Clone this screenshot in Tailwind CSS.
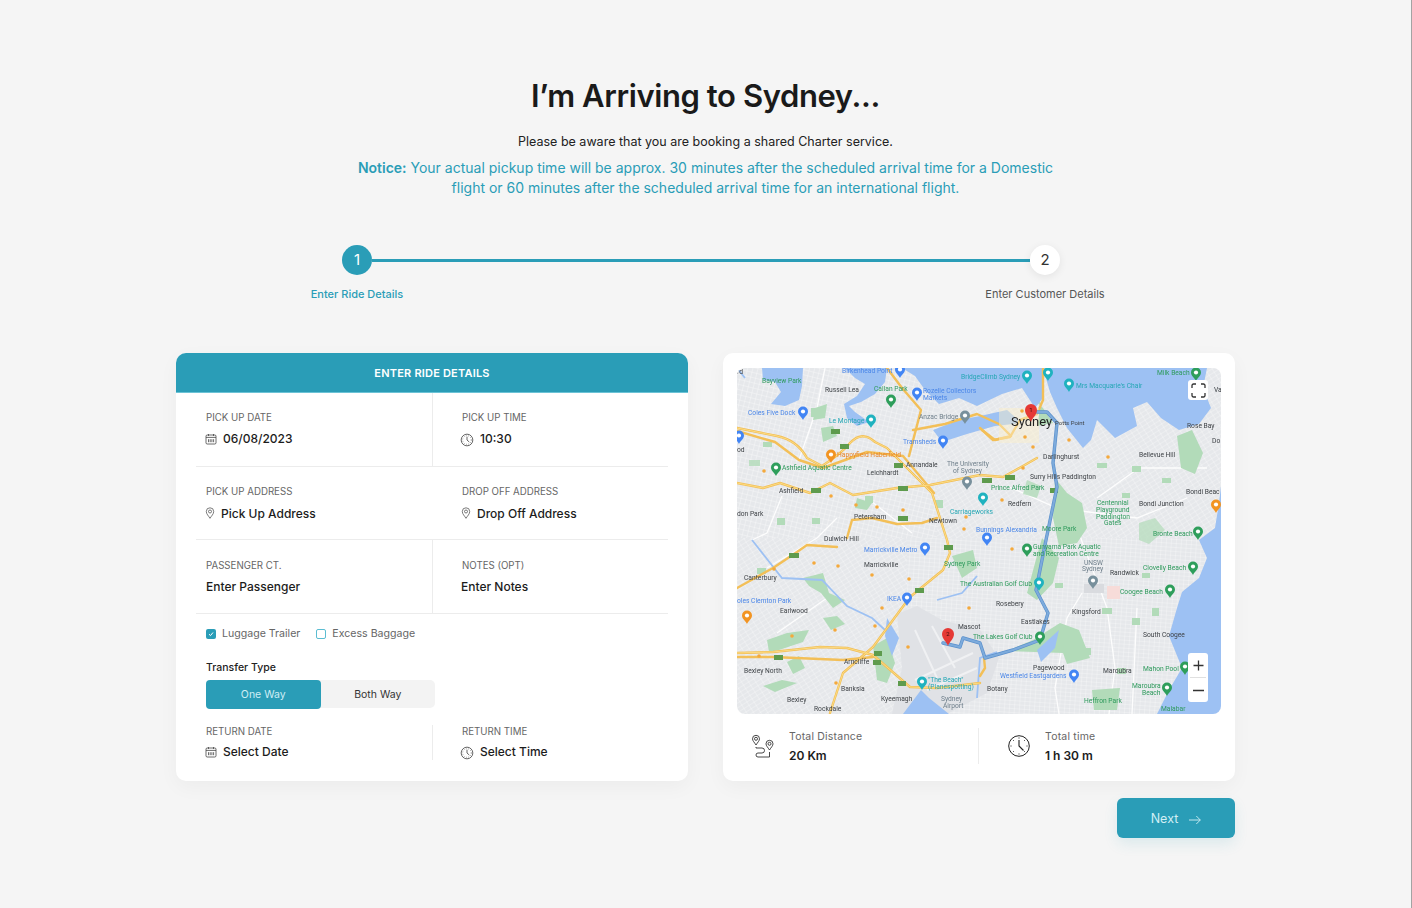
<!DOCTYPE html>
<html lang="en">
<head>
    <meta charset="UTF-8">
    <meta name="viewport" content="width=device-width, initial-scale=1.0">
    <title>Arriving to Sydney</title>
    <script src="https://cdn.jsdelivr.net/npm/@tailwindcss/browser@4"></script>
</head>
<body class="bg-[#f5f5f5] font-['Inter',sans-serif] text-[#1c1c1c] overflow-hidden">

<svg class="hidden">
    <symbol id="ico-cal" viewBox="0 0 12 12"><g fill="none" stroke="#444" stroke-width=".8"><rect x="1" y="2" width="10" height="9" rx="1.2"/><path d="M1 4.4h10M3.5 1v2M8.500 1v2M3.500 6.200v3M5.200 6.200v3M6.900 6.200v3M8.600 6.200v3"/></g></symbol>
    <symbol id="ico-clock" viewBox="0 0 12 12"><g fill="none" stroke="#444" stroke-width=".7"><circle cx="6" cy="6" r="5"/><circle cx="6" cy="6" r="3.700" stroke-dasharray=".5 1.500"/><path d="M6 3.200v2.800l2 1.800"/></g></symbol>
    <symbol id="ico-pin" viewBox="0 0 12 12"><g fill="none" stroke="#444" stroke-width=".7"><path d="M6 11.300C4.600 9 2.300 7 2.300 4.500a3.700 3.700 0 0 1 7.400 0C9.700 7 7.400 9 6 11.300Z"/><circle cx="6" cy="4.500" r="1.500"/></g></symbol>
</svg>

<div class="h-[908px] border-r border-[#a3a3a3]">
<main class="w-[1059px] ml-[176px] pt-[76px]">

    <!-- Heading -->
    <h1 class="h-10 leading-10 text-center text-[31px] font-semibold tracking-[-0.4px] text-[#1a1a1a]">I’m Arriving to Sydney...</h1>
    <p class="mt-4 h-5 leading-5 text-center text-[12.500px] text-[#222]">Please be aware that you are booking a shared Charter service.</p>
    <p class="mt-[6px] leading-[19.500px] text-center text-[14px] text-[#2a9db7]"><span class="font-semibold">Notice:</span> Your actual pickup time will be approx. 30 minutes after the scheduled arrival time for a Domestic<br>flight or 60 minutes after the scheduled arrival time for an international flight.</p>

    <!-- Stepper -->
    <div class="mt-[48px] ml-[121px] w-[808px]">
        <div class="flex items-center px-[45px]">
            <div class="w-[30px] h-[30px] rounded-full bg-[#2a9db7] text-white text-[15px] flex items-center justify-center">1</div>
            <div class="flex-1 h-[3px] bg-[#2a9db7]"></div>
            <div class="w-[30px] h-[30px] rounded-full bg-white shadow-[0_2px_8px_rgba(0,0,0,0.08)] text-[15px] text-[#333] flex items-center justify-center">2</div>
        </div>
        <div class="mt-[11px] flex justify-between text-[11px] leading-4">
            <span class="w-[120px] text-center text-[#2a9db7] font-medium">Enter Ride Details</span>
            <span class="w-[120px] text-center text-[#555] whitespace-nowrap">Enter Customer Details</span>
        </div>
    </div>

    <div class="mt-[51px] grid grid-cols-[512px_512px] gap-[35px]">

        <!-- Ride details -->
        <section class="h-[428px] bg-white rounded-[10px] shadow-[0_6px_20px_rgba(0,0,0,0.04)] overflow-hidden">
            <h2 class="h-10 pt-px bg-[#2a9db7] border-b border-[#6cc3d6] text-white text-[11px] font-semibold tracking-[0.2px] flex items-center justify-center">ENTER RIDE DETAILS</h2>
            <div class="px-5">
                <div class="grid grid-cols-[237px_1fr] h-[74px] border-b border-[#ececec]">
                    <div class="border-r border-[#ececec] pl-[10px] pt-[18px]">
                        <div class="text-[9.700px] leading-[13px] text-[#666]">PICK UP DATE</div>
                        <div class="mt-[7px] flex items-center gap-[6px] text-[12px] font-medium leading-4"><svg class="w-[12px] h-[12px] -ml-px"><use href="#ico-cal"/></svg>06/08/2023</div>
                    </div>
                    <div class="pl-[29px] pt-[18px]">
                        <div class="text-[9.700px] leading-[13px] text-[#666]">PICK UP TIME</div>
                        <div class="mt-[7px] flex items-center gap-[6px] text-[12px] font-medium leading-4"><svg class="w-[14px] h-[14px] -ml-[2px] mt-[1px]"><use href="#ico-clock"/></svg>10:30</div>
                    </div>
                </div>
                <div class="grid grid-cols-[237px_1fr] h-[73px] border-b border-[#ececec]">
                    <div class="pl-[10px] pt-[18px]">
                        <div class="text-[9.700px] leading-[13px] text-[#666]">PICK UP ADDRESS</div>
                        <div class="mt-2 flex items-center gap-[5px] text-[12px] font-medium leading-4"><svg class="w-[12px] h-[12px] -ml-[2px] -mt-[2px]"><use href="#ico-pin"/></svg>Pick Up Address</div>
                    </div>
                    <div class="pl-[29px] pt-[18px]">
                        <div class="text-[9.700px] leading-[13px] text-[#666]">DROP OFF ADDRESS</div>
                        <div class="mt-2 flex items-center gap-[5px] text-[12px] font-medium leading-4"><svg class="w-[12px] h-[12px] -ml-[2px] -mt-[2px]"><use href="#ico-pin"/></svg>Drop Off Address</div>
                    </div>
                </div>
                <div class="grid grid-cols-[237px_1fr] h-[74px] border-b border-[#ececec]">
                    <div class="border-r border-[#ececec] pl-[10px] pt-[19px]">
                        <div class="text-[9.700px] leading-[13px] text-[#666]">PASSENGER CT.</div>
                        <div class="mt-[7px] text-[12px] font-medium leading-4">Enter Passenger</div>
                    </div>
                    <div class="pl-[29px] pt-[19px]">
                        <div class="text-[9.700px] leading-[13px] text-[#666]">NOTES (OPT)</div>
                        <div class="mt-[7px] -ml-px text-[12px] font-medium leading-4">Enter Notes</div>
                    </div>
                </div>

                <div class="pl-[10px]">
                    <div class="mt-[13px] flex items-center h-[13px] text-[10.600px] text-[#666]">
                        <span class="w-[10px] h-[10px] rounded-[2px] bg-[#2a9db7] flex items-center justify-center">
                            <svg class="w-[6px] h-[6px]" viewBox="0 0 6 6"><path d="M1 3.200 2.500 4.600 5 1.500" fill="none" stroke="#fff" stroke-width="1"/></svg>
                        </span>
                        <span class="ml-[6px]">Luggage Trailer</span>
                        <span class="ml-4 w-[10px] h-[10px] rounded-[2px] border border-[#5bbdd2] bg-white"></span>
                        <span class="ml-[6px]">Excess Baggage</span>
                    </div>
                    <div class="mt-[21px] h-[13px] leading-[13px] text-[10.500px] font-medium text-[#222]">Transfer Type</div>
                    <div class="mt-[6px] w-[229px] h-[28px] rounded-[5px] bg-[#f3f3f3] grid grid-cols-2 text-[10.500px] leading-[29px] text-center">
                        <div class="rounded-[4px] bg-[#2a9db7] text-[#cfeef5]">One Way</div>
                        <div class="text-[#333]">Both Way</div>
                    </div>
                </div>

                <div class="mt-[17px] grid grid-cols-[237px_1fr] h-[33px]">
                    <div class="border-r border-[#ececec] pl-[10px]">
                        <div class="text-[9.700px] leading-[13px] text-[#666]">RETURN DATE</div>
                        <div class="mt-[6px] flex items-center gap-[6px] text-[12px] font-medium leading-4"><svg class="w-[12px] h-[12px] -ml-px"><use href="#ico-cal"/></svg>Select Date</div>
                    </div>
                    <div class="pl-[29px]">
                        <div class="text-[9.700px] leading-[13px] text-[#666]">RETURN TIME</div>
                        <div class="mt-[6px] flex items-center gap-[6px] text-[12px] font-medium leading-4"><svg class="w-[14px] h-[14px] -ml-[2px] mt-[1px]"><use href="#ico-clock"/></svg>Select Time</div>
                    </div>
                </div>
            </div>
        </section>

        <!-- Map and totals -->
        <section class="h-[428px] bg-white rounded-[10px] shadow-[0_6px_20px_rgba(0,0,0,0.04)] pt-[15px] px-[14px]">
            <div class="relative w-[484px] h-[346px] rounded-lg overflow-hidden">
                <svg class="block blur-[0.35px]" width="484" height="346" viewBox="0 0 484 346" font-family="Roboto, sans-serif">
                    <defs>
                        <pattern id="streets" width="5" height="5" patternUnits="userSpaceOnUse" patternTransform="rotate(14)">
                            <path d="M0 0H5M0 0V5" stroke="#fbfbfc" stroke-width=".7"/>
                        </pattern>
                        <pattern id="streets2" width="6" height="4" patternUnits="userSpaceOnUse" patternTransform="rotate(-32)">
                            <path d="M0 0H6M0 0V4" stroke="#fbfbfc" stroke-width=".6"/>
                        </pattern>
                        <pattern id="streets3" width="4" height="6" patternUnits="userSpaceOnUse" patternTransform="rotate(58)">
                            <path d="M0 0H4M0 0V6" stroke="#fbfbfc" stroke-width=".6"/>
                        </pattern>
                        <pattern id="streets4" width="5" height="4" patternUnits="userSpaceOnUse" patternTransform="rotate(4)">
                            <path d="M0 0H5M0 0V4" stroke="#fbfbfc" stroke-width=".6"/>
                        </pattern>
                        <g id="pin"><path d="M0 0C-1-3-5-5-5-8.500A5 5 0 1 1 5-8.500C5-5 1-3 0 0Z"/><circle cy="-8.500" r="2.100" fill="#fff"/></g>
                    </defs>

                    <rect width="484" height="346" fill="#e6e8eb"/>
                    <rect width="200" height="170" fill="url(#streets)"/>
                    <rect x="200" width="284" height="170" fill="url(#streets2)"/>
                    <rect y="170" width="170" height="176" fill="url(#streets3)"/>
                    <rect x="170" y="170" width="314" height="176" fill="url(#streets4)"/>

                    <!-- arterials -->
                    <g fill="none" stroke="#fdfdfd" stroke-width="1.300">
                        <path d="M88 0 80 40 62 92M45 128 30 165 15 172M340 160 370 240 378 300 372 346M400 240 395 346M345 225 330 250 318 320 322 346M270 118 320 140 400 150 450 130M130 130 175 165M90 230 40 265M100 150 80 170 30 200M360 130 402 100 470 100"/>
                    </g>

                    <!-- airport -->
                    <path d="M160 246 180 238 205 252 243 262 262 290 250 325 210 346H155L165 300Z" fill="#e0e2e6"/>
                    <g fill="none" stroke="#f0f1f3" stroke-width="2"><path d="M178 262 200 310M195 258 218 300M178 312 236 285M190 322 240 300"/></g>

                    <!-- parks -->
                    <g fill="#b2dbb9">
                        <path d="M318 110 330 125 345 135 350 160 340 175 322 178 316 150Z"/>
                        <path d="M305 170 322 190 316 215 300 232 290 225 298 195Z"/>
                        <path d="M323 255 342 262 353 290 330 296 326 285 270 283 296 272Z"/>
                        <path d="M136 278 150 270 158 295 150 315 140 312Z"/>
                        <path d="M290 25 306 40 316 55 300 58 304 35Z"/>
                        <path d="M355 322 383 320 380 342 357 342Z"/>
                        <path d="M84 60 96 58 100 68 86 74Z"/>
                        <path d="M78 40 90 36 88 50 76 52Z"/>
                        <path d="M440 68 455 62 466 85 458 106 444 100Z"/>
                        <path d="M66 210 86 205 92 225 108 232 96 240 84 225 72 218Z"/>
                        <path d="M30 272 50 265 72 262 66 274 42 282 32 284Z"/>
                        <path d="M86 250 100 248 108 256 94 262Z"/>
                        <path d="M26 318 45 312 60 315 38 324Z"/>
                        <path d="M50 294 62 288 68 300 56 306Z"/>
                        <path d="M120 130 135 135 130 142 118 140Z"/>
                        <path d="M215 188 236 182 240 200 225 210Z"/>
                        <path d="M402 155 418 150 428 162 412 176 402 172Z" opacity=".7"/>
                        <path d="M290 112 304 118 300 130 286 126Z" opacity=".8"/>
                        <rect x="12" y="92" width="11" height="6" opacity=".8"/>
                        <rect x="26" y="74" width="9" height="5"/>
                        <rect x="74" y="40" width="9" height="9"/>
                        <rect x="128" y="128" width="8" height="7"/>
                        <rect x="198" y="132" width="8" height="8"/>
                        <rect x="344" y="280" width="10" height="7"/>
                        <rect x="318" y="215" width="8" height="5"/>
                        <rect x="395" y="250" width="8" height="7"/>
                        <rect x="365" y="240" width="10" height="6"/>
                        <rect x="415" y="240" width="7" height="8"/>
                        <rect x="395" y="98" width="9" height="6"/>
                        <rect x="385" y="125" width="8" height="5"/>
                        <rect x="360" y="95" width="10" height="5"/>
                        <rect x="425" y="110" width="9" height="5"/>
                        <rect x="380" y="300" width="9" height="6"/>
                        <rect x="405" y="205" width="8" height="5"/>
                        <rect x="20" y="200" width="9" height="6"/>
                        <rect x="40" y="150" width="8" height="7"/>
                        <rect x="75" y="150" width="8" height="6"/>
                    </g>
                    <rect x="370" y="218" width="13" height="13" fill="#f7dcd9"/>
                    <rect x="347" y="216" width="20" height="9" fill="#d9dbdf"/>

                    <!-- water -->
                    <g fill="#9dc1f3">
                        <path d="M25 0H66L65 18 62 32 48 38 34 36 44 24 38 14 26 12Z"/>
                        <path d="M108 0H150L148 14 138 26 124 34 112 38 118 44 132 54 120 58 110 50 107 36 120 28 128 16 118 10Z"/>
                        <path d="M165 0H306V30L298 40 285 20 265 26 240 38 222 30 202 36 188 22 178 8Z"/>
                        <path d="M196 62 222 52 243 48 270 42 285 55 258 58 230 66 205 74Z"/>
                        <path d="M306 0H470L466 20 474 40 462 56 442 62 424 50 410 34 396 40 400 58 378 70 360 52 354 72 346 80 330 60 320 40 313 24Z"/>
                        <path d="M484 118V346H420L432 322 445 300 432 268 440 240 445 224 462 210 470 190 462 172 478 160 482 135Z"/>
                        <path d="M166 346 184 322 192 330 212 346Z"/>
                        <path d="M150 250 162 270 155 288 148 268Z"/>
                        <path d="M300 282 322 262 318 280 304 294Z"/>
                    </g>
                    <g fill="none" stroke="#9dc1f3" stroke-width="1.800">
                        <path d="M15 172 45 210 85 212 110 238 135 250 148 262"/>
                        <path d="M200 232 225 225 240 208"/>
                        <path d="M260 284 243 290 240 330"/>
                        <path d="M0 0 8 10"/>
                    </g>

                    <!-- motorways -->
                    <g fill="none" stroke="#f3bf57" stroke-linecap="round" stroke-linejoin="round" stroke-width="2.400">
                        <path d="M0 60 40 68Q60 72 70 90L85 98Q105 85 113 75 125 62 138 74L150 80 195 125 210 172 213 185 206 202 173 229 136 279 106 305 93 345"/>
                        <path d="M0 63 38 74 62 92 86 100 130 84 166 88 197 125"/>
                        <path d="M150 0 165 20 184 42 178 65 172 88"/>
                        <path d="M176 62 208 56 240 46 262 56 274 68 258 72 245 62"/>
                        <path d="M306 0V32L300 46 283 52 273 69 256 72 243 60"/>
                        <path d="M0 115 26 120 43 115 73 125 93 115 116 127 160 120 193 117 243 107 266 109 286 98 300 90"/>
                        <path d="M0 285 36 284 83 279 110 280 136 287 173 319 200 320 243 315"/>
                        <path d="M0 289 36 289 106 292 136 289"/>
                        <path d="M0 220 36 200 60 184 70 177 100 179"/>
                        <path d="M110 170 115 152 135 150 160 156 185 155 200 150"/>
                        <path d="M243 308 248 300 247 290"/>
                    </g>
                    <g fill="none" stroke="#fbdc84" stroke-linecap="round" stroke-linejoin="round" stroke-width="1">
                        <path d="M0 60 40 68Q60 72 70 90L85 98Q105 85 113 75 125 62 138 74L150 80 195 125 210 172 213 185 206 202 173 229 136 279 106 305 93 345"/>
                        <path d="M0 285 36 284 83 279 110 280 136 287 173 319 200 320 243 315"/>
                        <path d="M0 115 26 120 43 115 73 125 93 115 116 127 160 120 193 117 243 107 266 109 286 98 300 90"/>
                    </g>
                    <rect x="262" y="40" width="40" height="35" fill="#fdf0c8" opacity=".45"/>

                    <!-- road shields -->
                    <g fill="#5e9b4d">
                        <rect x="94" y="61" width="9" height="5"/><rect x="103" y="76" width="9" height="5"/><rect x="157" y="95" width="9" height="5"/>
                        <rect x="74" y="120" width="10" height="5"/><rect x="161" y="118" width="10" height="5"/><rect x="161" y="148" width="10" height="5"/>
                        <rect x="245" y="110" width="10" height="5"/><rect x="268" y="107" width="10" height="5"/><rect x="313" y="120" width="8" height="5"/>
                        <rect x="52" y="185" width="10" height="5"/><rect x="178" y="220" width="9" height="5"/><rect x="207" y="177" width="9" height="5"/>
                        <rect x="37" y="287" width="9" height="5"/><rect x="137" y="283" width="8" height="5"/><rect x="136" y="292" width="8" height="5"/><rect x="161" y="313" width="8" height="5"/>
                    </g>

                    <!-- junction dots -->
                    <g fill="#f4a93c">
                        <circle cx="27" cy="103" r="1.800"/><circle cx="94" cy="128" r="1.800"/><circle cx="119" cy="137" r="1.800"/><circle cx="140" cy="139" r="1.800"/><circle cx="166" cy="142" r="1.800"/><circle cx="229" cy="149" r="1.800"/><circle cx="227" cy="161" r="1.800"/>
                        <circle cx="285" cy="43" r="1.800"/><circle cx="288" cy="69" r="1.800"/><circle cx="296" cy="79" r="1.800"/><circle cx="332" cy="72" r="1.800"/><circle cx="371" cy="89" r="1.800"/><circle cx="286" cy="100" r="1.800"/><circle cx="265" cy="132" r="1.800"/><circle cx="275" cy="181" r="1.800"/>
                        <circle cx="37" cy="201" r="1.800"/><circle cx="77" cy="195" r="1.800"/><circle cx="101" cy="198" r="1.800"/><circle cx="135" cy="207" r="1.800"/><circle cx="172" cy="211" r="1.800"/><circle cx="232" cy="240" r="1.800"/><circle cx="145" cy="240" r="1.800"/><circle cx="138" cy="258" r="1.800"/><circle cx="98" cy="262" r="1.800"/><circle cx="55" cy="268" r="1.800"/><circle cx="171" cy="279" r="1.800"/><circle cx="22" cy="288" r="1.800"/><circle cx="99" cy="315" r="1.800"/>
                    </g>

                    <!-- route -->
                    <g fill="none" stroke-linecap="round" stroke-linejoin="round">
                        <path d="M300 44H310L320 55 316 95 320 119 309 172 305 192 299 222 311 245 303 272 276 282 248 290 243 275 226 270 223 279 206 275" stroke="#5b90cc" stroke-width="3.400"/>
                        <path d="M300 44H310L320 55 316 95 320 119 309 172 305 192 299 222 311 245 303 272 276 282 248 290 243 275 226 270 223 279 206 275" stroke="#7dabdc" stroke-width="2"/>
                    </g>

                    <!-- place pins -->
                    <g fill="#4285f4">
                        <use href="#pin" x="66" y="52"/><use href="#pin" x="180" y="33"/><use href="#pin" x="163" y="10"/><use href="#pin" x="206" y="81"/><use href="#pin" x="2" y="76"/><use href="#pin" x="250" y="178"/><use href="#pin" x="188" y="188"/><use href="#pin" x="170" y="238"/><use href="#pin" x="337" y="315"/>
                    </g>
                    <g fill="#2e9e5b">
                        <use href="#pin" x="154" y="40"/><use href="#pin" x="39" y="108"/><use href="#pin" x="459" y="13"/><use href="#pin" x="461" y="172"/><use href="#pin" x="290" y="189"/><use href="#pin" x="456" y="207"/><use href="#pin" x="433" y="230"/><use href="#pin" x="303" y="277"/><use href="#pin" x="448" y="307"/><use href="#pin" x="430" y="328"/>
                    </g>
                    <g fill="#1fb2bf">
                        <use href="#pin" x="134" y="60"/><use href="#pin" x="290" y="16"/><use href="#pin" x="311" y="13"/><use href="#pin" x="332" y="24"/><use href="#pin" x="246" y="138"/><use href="#pin" x="185" y="322"/><use href="#pin" x="302" y="223"/>
                    </g>
                    <g fill="#78909c">
                        <use href="#pin" x="228" y="56"/><use href="#pin" x="230" y="122"/><use href="#pin" x="356" y="221"/>
                    </g>
                    <g fill="#f29422">
                        <use href="#pin" x="94" y="95"/><use href="#pin" x="479" y="145"/><use href="#pin" x="10" y="256"/>
                    </g>

                    <!-- dark labels -->
                    <g font-size="6.700" fill="#3f4347">
                        <text x="0" y="6">rd</text><text x="88" y="24">Russell Lea</text><text x="169" y="99">Annandale</text><text x="130" y="107">Leichhardt</text>
                        <text x="42" y="125">Ashfield</text><text x="0" y="148">don Park</text><text x="117" y="151">Petersham</text><text x="192" y="155">Newtown</text><text x="87" y="173">Dulwich Hill</text>
                        <text x="0" y="84">od</text><text x="318" y="57" font-size="6">Potts Point</text><text x="450" y="60">Rose Bay</text><text x="402" y="89">Bellevue Hill</text><text x="306" y="91">Darlinghurst</text>
                        <text x="293" y="111">Surry Hills</text><text x="325" y="111">Paddington</text><text x="449" y="126">Bondi Beac</text><text x="271" y="138">Redfern</text><text x="402" y="138">Bondi Junction</text>
                        <text x="477" y="24">Va</text><text x="475" y="75">Do</text>
                        <text x="127" y="199">Marrickville</text><text x="7" y="212">Canterbury</text><text x="43" y="245">Earlwood</text><text x="221" y="261">Mascot</text><text x="107" y="296">Arncliffe</text>
                        <text x="7" y="305">Bexley North</text><text x="104" y="323">Banksia</text><text x="50" y="334">Bexley</text><text x="144" y="333">Kyeemagh</text><text x="77" y="343">Rockdale</text>
                        <text x="373" y="207">Randwick</text><text x="259" y="238">Rosebery</text><text x="335" y="246">Kingsford</text><text x="284" y="256">Eastlakes</text><text x="406" y="269">South Coogee</text>
                        <text x="296" y="302">Pagewood</text><text x="366" y="305">Maroubra</text><text x="250" y="323">Botany</text>
                    </g>
                    <text x="274" y="58" font-size="13" fill="#1f1f1f">Sydney</text>

                    <!-- green labels -->
                    <g font-size="6.700" fill="#2e9a5c">
                        <text x="25" y="15">Bayview Park</text><text x="137" y="23">Callan Park</text><text x="45" y="102">Ashfield Aquatic Centre</text><text x="254" y="122">Prince Alfred Park</text>
                        <text x="360" y="137">Centennial</text><text x="359" y="144">Playground</text><text x="359" y="150.500">Paddington</text><text x="367" y="157">Gates</text>
                        <text x="420" y="7">Milk Beach</text><text x="416" y="168">Bronte Beach</text><text x="305" y="163">Moore Park</text><text x="207" y="198">Sydney Park</text>
                        <text x="223" y="218">The Australian Golf Club</text><text x="296" y="181">Gunyama Park Aquatic</text><text x="296" y="188">and Recreation Centre</text>
                        <text x="406" y="202">Clovelly Beach</text><text x="383" y="226">Coogee Beach</text><text x="236" y="271">The Lakes Golf Club</text><text x="406" y="303">Mahon Pool</text>
                        <text x="395" y="320">Maroubra</text><text x="405" y="327">Beach</text><text x="347" y="335">Heffron Park</text><text x="424" y="343">Malabar</text>
                    </g>

                    <!-- teal, blue, orange and grey labels -->
                    <g font-size="6.700" fill="#26a7b5">
                        <text x="92" y="55">Le Montage</text><text x="224" y="11">BridgeClimb Sydney</text><text x="339" y="20">Mrs Macquarie's Chair</text><text x="213" y="146">Carriageworks</text><text x="191" y="314">"The Beach"</text><text x="191" y="321">(Planespotting)</text>
                    </g>
                    <g font-size="6.700" fill="#4a86e8">
                        <text x="105" y="5">Birkenhead Point</text><text x="186" y="25">Rozelle Collectors</text><text x="186" y="32">Markets</text><text x="11" y="47">Coles Five Dock</text><text x="166" y="76">Tramsheds</text>
                        <text x="239" y="164">Bunnings Alexandria</text><text x="127" y="184">Marrickville Metro</text><text x="0" y="235">oles Clemton Park</text><text x="150" y="233">IKEA</text><text x="263" y="310">Westfield Eastgardens</text>
                    </g>
                    <text x="100" y="89" font-size="6.700" fill="#e8862a">Happyfield Haberfield</text>
                    <g font-size="6.700" fill="#70808c">
                        <text x="182" y="51">Anzac Bridge</text><text x="210" y="98">The University</text><text x="216" y="105">of Sydney</text><text x="204" y="333">Sydney</text><text x="206" y="339.500">Airport</text><text x="347" y="197">UNSW</text><text x="345" y="203">Sydney</text>
                    </g>

                    <!-- route markers -->
                    <path d="M294 54C293 50 288 47 288 42A6 6 0 1 1 300 42C300 47 295 50 294 54Z" fill="#e53935"/>
                    <text x="294" y="44" text-anchor="middle" font-size="6" fill="#3a0d0d">1</text>
                    <path d="M211 278C210 274 205 271 205 266A6 6 0 1 1 217 266C217 271 212 274 211 278Z" fill="#e53935"/>
                    <text x="211" y="268" text-anchor="middle" font-size="6" fill="#3a0d0d">2</text>
                </svg>

                <!-- Map controls -->
                <button class="absolute top-3 right-[13px] w-5 h-5 rounded-[3px] bg-white flex items-center justify-center">
                    <svg class="w-[15px] h-[15px]" viewBox="0 0 15 15" fill="none" stroke="#333" stroke-width="1.300"><path d="M1 5V2.500A1.500 1.500 0 0 1 2.500 1H5M10 1h2.500A1.500 1.500 0 0 1 14 2.500V5M14 10v2.500a1.500 1.500 0 0 1-1.500 1.500H10M5 14H2.500A1.500 1.500 0 0 1 1 12.500V10"/></svg>
                </button>
                <div class="absolute top-[285px] right-[13px] w-5 h-[49px] rounded-[3px] bg-white flex flex-col items-center">
                    <svg class="w-[11px] h-[11px] mt-[7px]" viewBox="0 0 11 11" stroke="#333" stroke-width="1.300"><path d="M.5 5.500h10M5.500.500v10"/></svg>
                    <div class="w-[16px] h-px bg-[#e0e0e0] mt-[6px]"></div>
                    <svg class="w-[11px] h-[3px] mt-[11px]" viewBox="0 0 11 3" stroke="#333" stroke-width="1.500"><path d="M0 1.500h11"/></svg>
                </div>
            </div>

            <div class="mt-[14px] grid grid-cols-2 h-[34px]">
                <div class="border-r border-[#ececec] flex items-center pl-[14px] gap-[14px]">
                    <svg class="w-[24px] h-[24px]" viewBox="0 0 24 24" fill="none" stroke="#333" stroke-width=".9"><path d="M5 11C3.500 8.500 1.500 6.800 1.500 4.800a3.500 3.500 0 0 1 7 0C8.500 6.800 6.500 8.500 5 11Z"/><circle cx="5" cy="4.800" r="1.500"/><path d="M18.500 16c-1.500-2.500-3.500-4.200-3.500-6.200a3.500 3.500 0 0 1 7 0c0 2-2 3.700-3.500 6.200Z"/><circle cx="18.500" cy="9.800" r="1.500"/><path d="M5 13v1h6a2 2 0 0 1 0 5H7a2 2 0 0 0 0 4h11.500M18.500 18v5"/></svg>
                    <div class="pt-[2px]">
                        <div class="text-[10.500px] leading-[13px] text-[#666] tracking-[0.2px]">Total Distance</div>
                        <div class="mt-[5px] text-[12px] leading-4 font-semibold">20 Km</div>
                    </div>
                </div>
                <div class="flex items-center pl-[29px] gap-[15px]">
                    <svg class="w-[22px] h-[22px]" viewBox="0 0 22 22" fill="none" stroke="#222"><circle cx="11" cy="11" r="10.300" stroke-width="1"/><path d="M11 5v6l4.500 4.500" stroke-width="1.100"/><path d="M11 2.500v1M11 18.500v1M2.500 11h1M18.500 11h1M5 5l.7.7M17 5l-.7.7M5 17l.7-.7M17 17l-.7-.7" stroke-width="1"/></svg>
                    <div class="pt-[2px]">
                        <div class="text-[10.500px] leading-[13px] text-[#666] tracking-[0.2px]">Total time</div>
                        <div class="mt-[5px] text-[12px] leading-4 font-semibold">1 h 30 m</div>
                    </div>
                </div>
            </div>
        </section>
    </div>

    <div class="mt-[17px] flex justify-end">
        <button class="w-[118px] h-10 pt-[2px] rounded-[6px] bg-[#2a9db7] text-[#d3eff5] text-[12.500px] flex items-center justify-center gap-[11px] shadow-[0_6px_14px_rgba(42,157,183,0.12)]">
            Next
            <svg class="w-[12px] h-[10px] mt-[1px]" viewBox="0 0 12 10" fill="none" stroke="#d3eff5" stroke-width=".9"><path d="M0 5h11.300M7.300 1l4 4-4 4"/></svg>
        </button>
    </div>
</main>
</div>

</body>
</html>
